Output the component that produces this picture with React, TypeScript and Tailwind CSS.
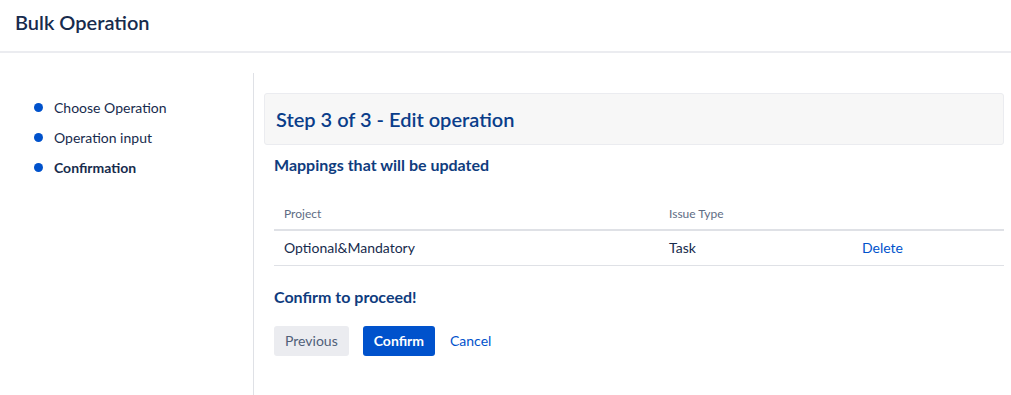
import React from 'react';

const steps = [
  { name: 'Choose Operation', active: false },
  { name: 'Operation input', active: false },
  { name: 'Confirmation', active: true },
];

const App: React.FC = () => {
  return (
    <div className="w-[1011px] h-[395px] bg-white text-[#172b4d] font-['Lato',sans-serif] overflow-hidden">
      {/* Header */}
      <header className="h-[53px] border-b-2 border-[#ebecf0] px-[15px] pt-[9px]">
        <h1 className="text-[20px] leading-[26px] font-semibold text-[#172b4d]">Bulk Operation</h1>
      </header>

      <div className="flex mt-[20px]">
        {/* Sidebar */}
        <aside className="w-[254px] h-[322px] border-r border-[#dfe1e6] pt-[24px] pl-[34px]">
          <ul className="flex flex-col gap-[10px]">
            {steps.map((s) => (
              <li key={s.name} className="flex items-center h-[20px] text-[14px]">
                <span className="w-[9px] h-[9px] rounded-full bg-[#0052cc] mr-[11px]" />
                <span className={s.active ? 'font-bold text-[#172b4d]' : 'text-[#172b4d]'}>{s.name}</span>
              </li>
            ))}
          </ul>
        </aside>

        {/* Main */}
        <main className="flex-1 pl-[10px] pr-[7px] pt-[20px]">
          <div className="h-[52px] bg-[#f7f7f7] border border-[#ebecf0] rounded-[3px] flex items-center px-[11px]">
            <h2 className="text-[20px] font-semibold text-[#0a3d8a]">Step 3 of 3 - Edit operation</h2>
          </div>

          <div className="pl-[10px]">
            <h3 className="mt-[8px] text-[16px] font-bold text-[#0f3c7e]">Mappings that will be updated</h3>

            <table className="w-full mt-[28px] text-left border-collapse">
              <thead>
                <tr className="border-b-2 border-[#dfe1e6]">
                  <th className="w-[395px] pl-[10px] pb-[6px] text-[12px] font-normal text-[#5e6c84]">Project</th>
                  <th className="w-[193px] pb-[6px] text-[12px] font-normal text-[#5e6c84]">Issue Type</th>
                  <th className="pb-[6px]" />
                </tr>
              </thead>
              <tbody>
                <tr className="border-b border-[#dfe1e6]">
                  <td className="pl-[10px] h-[35px] text-[14px] text-[#172b4d]">Optional&amp;Mandatory</td>
                  <td className="h-[35px] text-[14px] text-[#172b4d]">Task</td>
                  <td className="h-[35px] text-[14px] text-[#0052cc]">Delete</td>
                </tr>
              </tbody>
            </table>

            <h3 className="mt-[19px] text-[16px] font-bold text-[#0f3c7e]">Confirm to proceed!</h3>

            <div className="flex items-center mt-[17px]">
              <button className="h-[30px] px-[11px] rounded-[3px] bg-[#ebecf0] text-[14px] text-[#505f79]">Previous</button>
              <button className="h-[30px] ml-[14px] px-[11px] rounded-[3px] bg-[#0052cc] text-[14px] font-bold text-white">Confirm</button>
              <button className="h-[30px] ml-[4px] px-[11px] text-[14px] text-[#0052cc]">Cancel</button>
            </div>
          </div>
        </main>
      </div>
    </div>
  );
};

export default App;
